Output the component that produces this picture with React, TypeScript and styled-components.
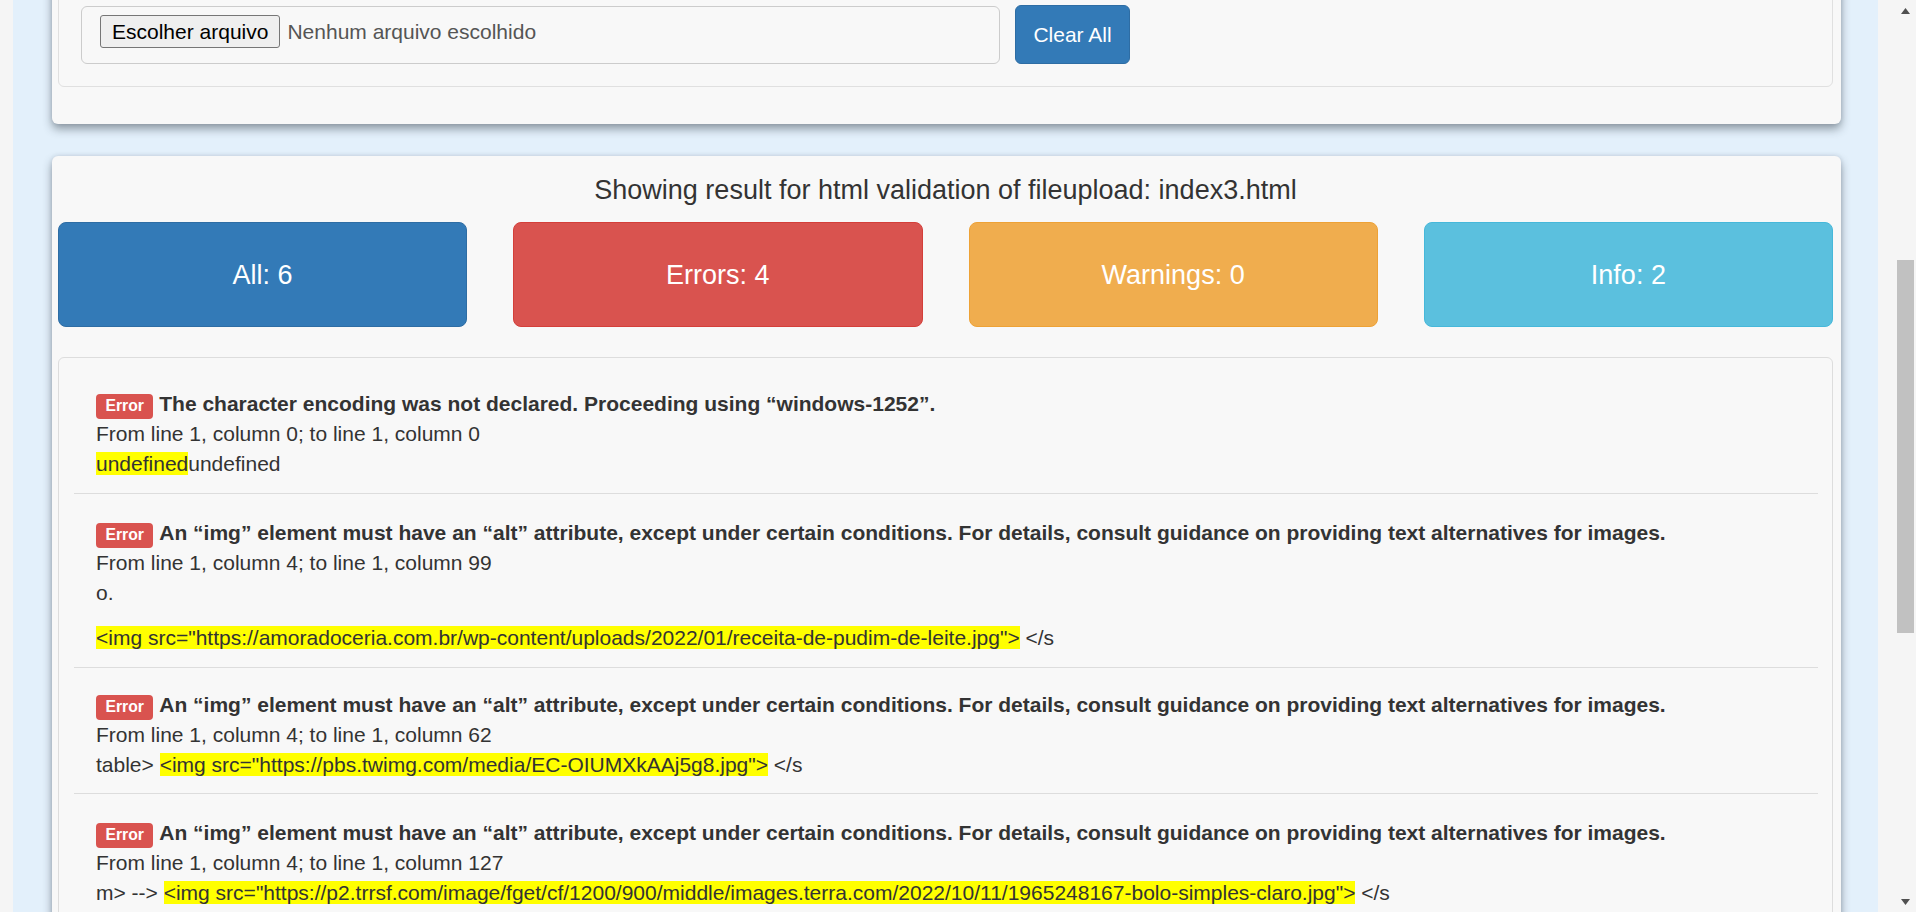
import React from "react";
import styled, { createGlobalStyle } from "styled-components";

const GlobalStyle = createGlobalStyle`
  html, body {
    margin: 0;
    padding: 0;
    height: 912px;
    overflow: hidden;
    background: #f5f5f5;
    font-family: "Liberation Sans", Arial, Helvetica, sans-serif;
    font-size: 21px;
    line-height: 30px;
    color: #333;
  }
  * { box-sizing: border-box; }
`;

const Viewport = styled.div`
  display: flex;
  height: 912px;
  overflow: hidden;
`;

const Gutter = styled.div<{ $w: number }>`
  flex: 0 0 ${(p) => p.$w}px;
  background: #f5f5f5;
`;

const Main = styled.main`
  flex: 1;
  background: #e3f0fb;
  padding: 0 37px 0 39px;
  display: flex;
  flex-direction: column;
  gap: 32px;
  overflow: hidden;
`;

const Card = styled.section`
  background: #f8f8f8;
  border-radius: 6px;
  box-shadow: 0 5px 10px rgba(40, 50, 60, 0.45), 0 0 4px rgba(40, 60, 80, 0.12);
  flex-shrink: 0;
`;

const UploadCard = styled(Card)`
  margin-top: -50px;
  padding: 20px 8px 37px 6px;
`;

const Well = styled.div`
  border: 1px solid #e0e0e0;
  border-radius: 6px;
  padding: 35px 22px 22px 22px;
`;

const UploadRow = styled.div`
  display: flex;
  align-items: flex-start;
  gap: 15px;
`;

const FileBox = styled.div`
  width: 919px;
  height: 58px;
  border: 1px solid #ccc;
  border-radius: 6px;
  padding: 8px 18px;
  display: flex;
  align-items: flex-start;
  background: #f8f8f8;
`;

const FileButton = styled.button`
  height: 33px;
  padding: 0 11px;
  background: #efefef;
  border: 1px solid #767676;
  border-radius: 3px;
  font-family: "Liberation Sans", Arial, sans-serif;
  font-size: 21px;
  line-height: 31px;
  color: #000;
`;

const FileName = styled.span`
  margin-left: 7px;
  font-size: 21px;
  line-height: 33px;
  color: #555;
`;

const PrimaryButton = styled.button`
  margin-top: -1px;
  width: 115px;
  height: 59px;
  background: #337ab7;
  border: 1px solid #2e6da4;
  border-radius: 6px;
  color: #fff;
  font-family: "Liberation Sans", Arial, sans-serif;
  font-size: 21px;
`;

const ResultCard = styled(Card)`
  padding: 19px 8px 40px 6px;
`;

const Heading = styled.h4`
  margin: 0;
  font-size: 27px;
  line-height: 30px;
  font-weight: 400;
  text-align: center;
  color: #333;
`;

const StatGrid = styled.div`
  margin-top: 17px;
  display: grid;
  grid-template-columns: repeat(4, 1fr);
  gap: 46px;
`;

const StatBox = styled.div<{ $bg: string; $border: string }>`
  height: 105px;
  border: 1px solid ${(p) => p.$border};
  background: ${(p) => p.$bg};
  border-radius: 8px;
  color: #fff;
  font-size: 27px;
  display: flex;
  align-items: center;
  justify-content: center;
`;

const MessageList = styled.div`
  margin-top: 30px;
  border: 1px solid #ddd;
  border-radius: 6px;
  padding: 7px 14px 0 15px;
`;

const MessageItem = styled.div<{ $top: number; $bottom: number }>`
  padding: ${(p) => p.$top}px 0 ${(p) => p.$bottom}px 22px;
  border-bottom: 1px solid #ddd;
`;

const Line = styled.div<{ $gap?: number }>`
  margin-top: ${(p) => p.$gap ?? 0}px;
  white-space: nowrap;
`;

const Label = styled.span`
  display: inline;
  padding: 0.2em 0.6em 0.3em;
  font-size: 75%;
  font-weight: 700;
  line-height: 1;
  color: #fff;
  background: #d9534f;
  border-radius: 0.25em;
  vertical-align: baseline;
`;

const Message = styled.strong`
  font-weight: 700;
`;

const Mark = styled.span`
  background: #ffff00;
`;

const Scrollbar = styled.div`
  flex: 0 0 21px;
  background: #f5f5f5;
  display: flex;
  flex-direction: column;
  align-items: center;
`;

const ArrowButton = styled.div`
  height: 21px;
  width: 21px;
  display: flex;
  align-items: center;
  justify-content: center;
`;

const Track = styled.div`
  flex: 1;
  width: 100%;
  display: flex;
  flex-direction: column;
  align-items: center;
`;

const Thumb = styled.div`
  width: 17px;
  background: #c1c1c1;
`;

const Arrow = ({ up }: { up?: boolean }) => (
  <svg width="9" height="6" viewBox="0 0 9 6">
    <polygon points={up ? "4.5,0 9,6 0,6" : "0,0 9,0 4.5,6"} fill="#505050" />
  </svg>
);

type Msg = {
  text: string;
  loc: string;
  top: number;
  bottom: number;
  extract: React.ReactNode[];
};

const ALT_MSG =
  "An \u201cimg\u201d element must have an \u201calt\u201d attribute, except under certain conditions. For details, consult guidance on providing text alternatives for images.";

const messages: Msg[] = [
  {
    text: "The character encoding was not declared. Proceeding using \u201cwindows-1252\u201d.",
    loc: "From line 1, column 0; to line 1, column 0",
    top: 24,
    bottom: 14,
    extract: [
      <Line key="a">
        <Mark>undefined</Mark>undefined
      </Line>,
    ],
  },
  {
    text: ALT_MSG,
    loc: "From line 1, column 4; to line 1, column 99",
    top: 24,
    bottom: 14,
    extract: [
      <Line key="a">o.</Line>,
      <Line key="b" $gap={15}>
        <Mark>{'<img src="https://amoradoceria.com.br/wp-content/uploads/2022/01/receita-de-pudim-de-leite.jpg">'}</Mark>
        {" </s"}
      </Line>,
    ],
  },
  {
    text: ALT_MSG,
    loc: "From line 1, column 4; to line 1, column 62",
    top: 22,
    bottom: 13,
    extract: [
      <Line key="a">
        {"table> "}
        <Mark>{'<img src="https://pbs.twimg.com/media/EC-OIUMXkAAj5g8.jpg">'}</Mark>
        {" </s"}
      </Line>,
    ],
  },
  {
    text: ALT_MSG,
    loc: "From line 1, column 4; to line 1, column 127",
    top: 24,
    bottom: 14,
    extract: [
      <Line key="a">
        {"m> --> "}
        <Mark>{'<img src="https://p2.trrsf.com/image/fget/cf/1200/900/middle/images.terra.com/2022/10/11/1965248167-bolo-simples-claro.jpg">'}</Mark>
        {" </s"}
      </Line>,
    ],
  },
];

const stats = [
  { label: "All: 6", bg: "#337ab7", border: "#2e6da4" },
  { label: "Errors: 4", bg: "#d9534f", border: "#d43f3a" },
  { label: "Warnings: 0", bg: "#f0ad4e", border: "#eea236" },
  { label: "Info: 2", bg: "#5bc0de", border: "#46b8da" },
];

export default function App() {
  const thumbTop = 260 - 21;
  return (
    <>
      <GlobalStyle />
      <Viewport>
        <Gutter $w={13} />
        <Main>
          <UploadCard>
            <Well>
              <UploadRow>
                <FileBox>
                  <FileButton type="button">Escolher arquivo</FileButton>
                  <FileName>Nenhum arquivo escolhido</FileName>
                </FileBox>
                <PrimaryButton type="button">Clear All</PrimaryButton>
              </UploadRow>
            </Well>
          </UploadCard>
          <ResultCard>
            <Heading>Showing result for html validation of fileupload: index3.html</Heading>
            <StatGrid>
              {stats.map((s) => (
                <StatBox key={s.label} $bg={s.bg} $border={s.border}>
                  {s.label}
                </StatBox>
              ))}
            </StatGrid>
            <MessageList>
              {messages.map((m, i) => (
                <MessageItem key={i} $top={m.top} $bottom={m.bottom}>
                  <Line>
                    <Label>Error</Label> <Message>{m.text}</Message>
                  </Line>
                  <Line>{m.loc}</Line>
                  {m.extract}
                </MessageItem>
              ))}
            </MessageList>
          </ResultCard>
        </Main>
        <Gutter $w={17} />
        <Scrollbar>
          <ArrowButton>
            <Arrow up />
          </ArrowButton>
          <Track>
            <Thumb style={{ marginTop: thumbTop, height: 373 }} />
          </Track>
          <ArrowButton>
            <Arrow />
          </ArrowButton>
        </Scrollbar>
      </Viewport>
    </>
  );
}
